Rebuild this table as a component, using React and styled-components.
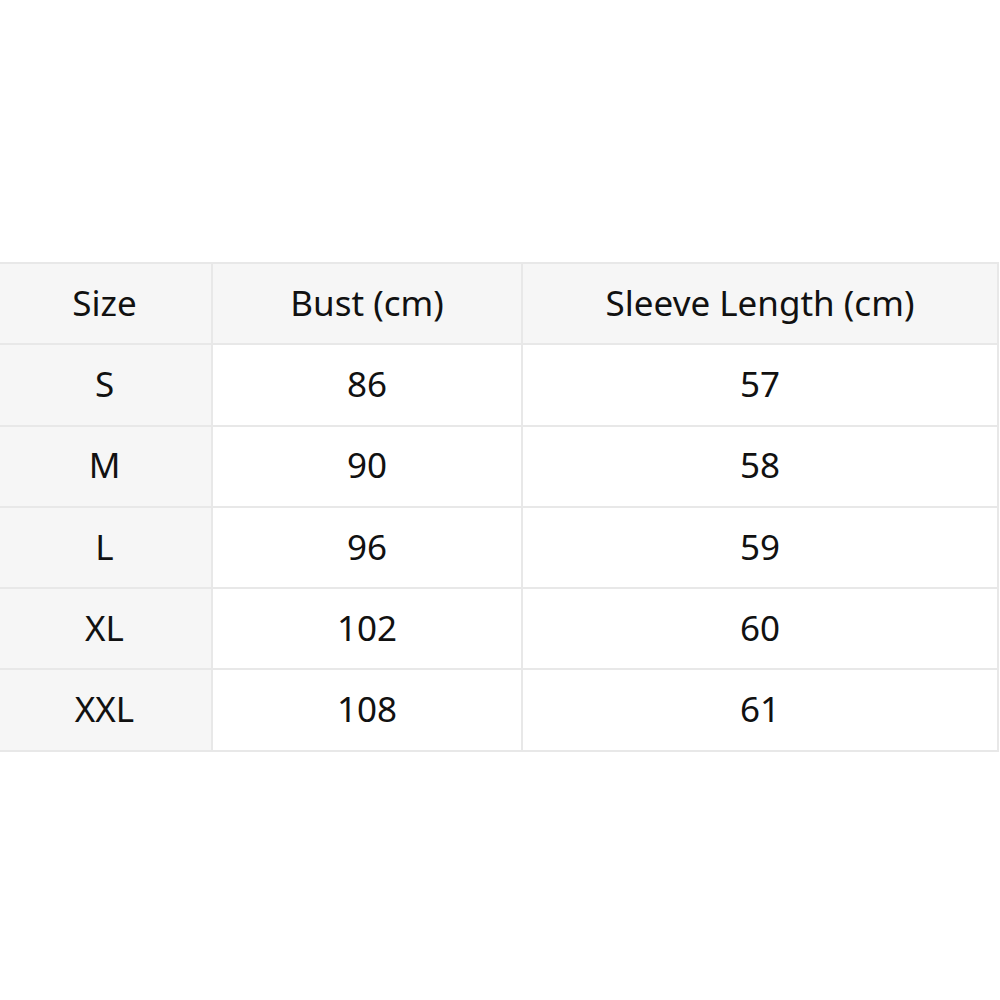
import styled, { createGlobalStyle } from "styled-components";

const Global = createGlobalStyle`
  html, body {
    margin: 0;
    padding: 0;
    background: #ffffff;
  }
  body {
    font-family: "Noto Sans", "Open Sans", sans-serif;
  }
`;

const Page = styled.div`
  width: 1000px;
  height: 1000px;
  display: flex;
  align-items: flex-start;
  padding-top: 262px;
  box-sizing: border-box;
  overflow: hidden;
`;

const Table = styled.table`
  border-collapse: collapse;
  width: 1003px;
  margin-left: -4px;
  flex-shrink: 0;
  table-layout: fixed;
  color: #111111;
  font-size: 35px;
  line-height: 1;
`;

const Cell = styled.td`
  height: 76.3px;
  padding: 0 0 3px;
  text-align: center;
  vertical-align: middle;
  border: 2px solid #e8e8e8;
  background: ${(p) => (p.$shade ? "#f6f6f6" : "#ffffff")};
`;

const HeadCell = styled(Cell).attrs({ as: "th" })`
  font-weight: 400;
  background: #f6f6f6;
`;

const rows = [
  ["S", "86", "57"],
  ["M", "90", "58"],
  ["L", "96", "59"],
  ["XL", "102", "60"],
  ["XXL", "108", "61"],
];

export default function App() {
  return (
    <Page>
      <Global />
      <Table>
        <colgroup>
          <col style={{ width: 215 }} />
          <col style={{ width: 310 }} />
          <col />
        </colgroup>
        <thead>
          <tr>
            <HeadCell>Size</HeadCell>
            <HeadCell>Bust (cm)</HeadCell>
            <HeadCell>Sleeve Length (cm)</HeadCell>
          </tr>
        </thead>
        <tbody>
          {rows.map(([size, bust, sleeve]) => (
            <tr key={size}>
              <Cell $shade>{size}</Cell>
              <Cell>{bust}</Cell>
              <Cell>{sleeve}</Cell>
            </tr>
          ))}
        </tbody>
      </Table>
    </Page>
  );
}
